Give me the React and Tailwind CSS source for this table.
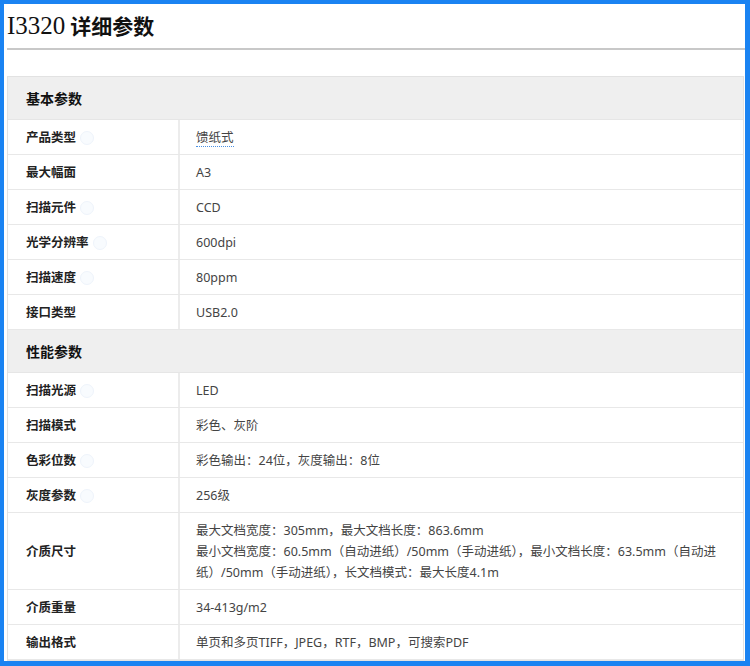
import React from 'react';

const basic = [
  { label: '产品类型', value: '馈纸式', tip: true, link: true },
  { label: '最大幅面', value: 'A3' },
  { label: '扫描元件', value: 'CCD', tip: true },
  { label: '光学分辨率', value: '600dpi', tip: true },
  { label: '扫描速度', value: '80ppm', tip: true },
  { label: '接口类型', value: 'USB2.0' },
];

const perf = [
  { label: '扫描光源', value: 'LED', tip: true },
  { label: '扫描模式', value: '彩色、灰阶' },
  { label: '色彩位数', value: '彩色输出：24位，灰度输出：8位', tip: true },
  { label: '灰度参数', value: '256级', tip: true },
  {
    label: '介质尺寸',
    lines: [
      '最大文档宽度：305mm，最大文档长度：863.6mm',
      '最小文档宽度：60.5mm（自动进纸）/50mm（手动进纸），最小文档长度：63.5mm（自动进',
      '纸）/50mm（手动进纸），长文档模式：最大长度4.1m',
    ],
  },
  { label: '介质重量', value: '34-413g/m2' },
  { label: '输出格式', value: '单页和多页TIFF，JPEG，RTF，BMP，可搜索PDF' },
];

const valueFont = { fontFamily: '"Noto Sans", "Noto Sans CJK SC", sans-serif' };

const Tip = () => (
  <span className="ml-[4px] inline-block w-[14px] h-[14px] rounded-full border border-[#eef4fb] bg-[#f8fbfe]" />
);

const Row = ({ row }) => (
  <div className="flex border-b border-[#e8e8e8]">
    <div className="w-[172px] shrink-0 border-r-2 border-[#ececec] pl-[18px] pt-[2px] flex items-center text-[12.5px] font-bold text-[#222]">
      {row.label}
      {row.tip && <Tip />}
    </div>
    {row.lines ? (
      <div className="flex-1 pl-[16px] pt-[7px] pb-[6px] text-[12.5px] leading-[21px] text-[#444]" style={valueFont}>
        {row.lines.map((l) => (
          <div key={l}>{l}</div>
        ))}
      </div>
    ) : (
      <div className="flex-1 pl-[16px] pt-[2px] h-[34px] flex items-center text-[12.5px] text-[#444]" style={valueFont}>
        <span className={row.link ? 'border-b border-dotted border-[#4a90e2] leading-[16px]' : ''}>{row.value}</span>
      </div>
    )}
  </div>
);

const Section = ({ title, rows }) => (
  <div>
    <div className="h-[43px] bg-[#efefef] border-b border-[#e6e6e6] pl-[18px] flex items-center text-[14px] font-bold text-[#111]">
      {title}
    </div>
    {rows.map((r) => (
      <Row key={r.label} row={r} />
    ))}
  </div>
);

export default function App() {
  return (
    <div className="w-[750px] h-[666px] bg-[#1a83f2] pt-[4px] pl-[4px] pr-[5px] pb-[5px]">
      <div
        className="w-full h-full bg-white flex flex-col overflow-hidden"
        style={{ fontFamily: '"Noto Sans", "Noto Sans CJK SC", sans-serif' }}
      >
        <div className="h-[44px] shrink-0 pl-[3px] flex items-center text-[#111]">
          <span className="text-[25px]" style={{ fontFamily: '"Liberation Serif", serif' }}>I3320</span>
          <span className="ml-[5px] text-[21px] font-bold" style={{ fontFamily: '"Noto Sans CJK SC", sans-serif' }}>详细参数</span>
        </div>
        <div className="ml-[3px] h-[2px] shrink-0 bg-[#c8c8c8]" />
        <div className="mt-[26px] ml-[3px] mr-[1px] shrink-0 border border-[#e2e2e2]">
          <Section title="基本参数" rows={basic} />
          <Section title="性能参数" rows={perf} />
        </div>
      </div>
    </div>
  );
}
